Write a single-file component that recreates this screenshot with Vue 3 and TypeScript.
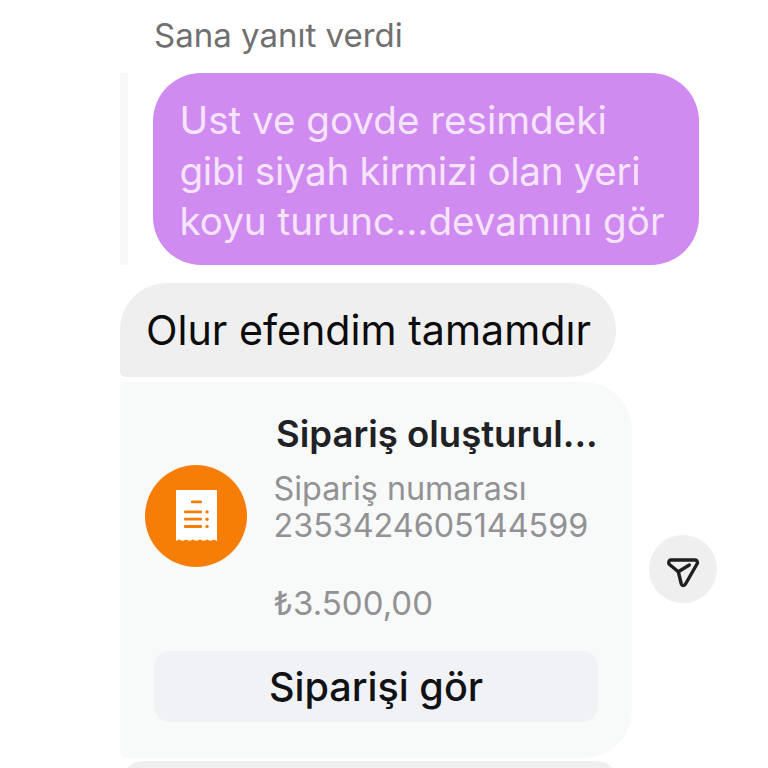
<template>
  <div class="thread">
    <div class="reply-label">Sana yanıt verdi</div>

    <div class="reply-row">
      <div class="reply-bar"></div>
      <div class="reply-bubble">
        Ust ve govde resimdeki<br>
        <span class="tight">gibi siyah kirmizi olan yeri</span><br>
        koyu turunc...devamını gör
      </div>
    </div>

    <div class="message">Olur efendim tamamdır</div>

    <div class="card-row">
      <div class="card">
        <div class="card-body">
          <div class="order-icon">
            <svg width="60" height="60" viewBox="0 0 60 60">
              <path fill="#fff" d="M10 4H51V55L48 53.500L44.500 55L41 53.500L37.500 55L34 53.500L30.500 55L27 53.500L23.500 55L20 53.500L16.500 55L13 53.500L10 55Z" />
              <g fill="#f67d06">
                <rect x="25" y="14.500" width="11" height="2.800" rx="1" />
                <rect x="18" y="24.500" width="18" height="2.800" rx="1" />
                <rect x="18" y="31.800" width="18" height="2.800" rx="1" />
                <rect x="18" y="39.100" width="18" height="2.800" rx="1" />
                <circle cx="41" cy="25.900" r="1.700" />
                <circle cx="41" cy="33.200" r="1.700" />
                <circle cx="41" cy="40.500" r="1.700" />
              </g>
            </svg>
          </div>
          <div class="order-info">
            <div class="order-title">Sipariş oluşturul...</div>
            <div class="order-line">Sipariş numarası</div>
            <div class="order-line">{{ orderNumber }}</div>
            <div class="order-price">{{ price }}</div>
          </div>
        </div>
        <div class="order-button">Siparişi gör</div>
      </div>

      <div class="share">
        <svg class="share-icon" width="36" height="36" viewBox="0 0 36 36" fill="none" stroke="#1f1f1f" stroke-width="3.400" stroke-linejoin="round" stroke-linecap="round">
          <path d="M6 9H30C32 9 33 11 32 13L20.500 33C19.500 35 17 35 16.300 33L13.300 20.700L4.500 13.500C3 12 3.800 9 6 9Z" />
          <path d="M13.300 20.700L24.300 14" />
        </svg>
      </div>
    </div>

    <div class="next-message"></div>
  </div>
</template>

<script setup lang="ts">
const orderNumber = '2353424605144599'
const price = '₺3.500,00'
</script>

<style>
html, body {
  background: #fff;
  overflow: hidden;
}
</style>

<style scoped>
.thread {
  height: 768px;
  overflow: hidden;
  padding-left: 120px;
  box-sizing: border-box;
  font-family: Inter, "Noto Sans", sans-serif;
  background: #fff;
}

.reply-label {
  height: 73px;
  box-sizing: border-box;
  padding: 15px 0 0 34px;
  font-size: 33px;
  line-height: 40px;
  color: #707070;
}

.reply-row {
  display: flex;
  gap: 25px;
}

.reply-bar {
  width: 8px;
  background: #f8f8f8;
}

.reply-bubble {
  width: 546px;
  height: 192px;
  box-sizing: border-box;
  padding: 22px 0 0 26.500px;
  border-radius: 48px;
  background: #cf8bf0;
  color: #f6e4fd;
  font-size: 38.600px;
  line-height: 50.500px;
  white-space: nowrap;
}

.tight {
  letter-spacing: -0.300px;
}

.message {
  width: 496px;
  height: 94px;
  box-sizing: border-box;
  margin-top: 18px;
  padding: 24px 0 0 26px;
  border-radius: 48px 48px 48px 6px;
  background: #efefef;
  color: #0c0c0c;
  font-size: 41.200px;
  line-height: 46px;
  white-space: nowrap;
}

.card-row {
  display: flex;
  align-items: center;
  gap: 17px;
  margin-top: 5px;
}

.card {
  width: 512px;
  height: 376px;
  box-sizing: border-box;
  padding: 30px 34px 0 25px;
  border-radius: 6px 48px 48px 6px;
  background: #f8f9f9;
}

.card-body {
  display: flex;
  align-items: flex-start;
  gap: 26.500px;
}

.order-icon {
  width: 102px;
  height: 102px;
  margin-top: 53px;
  flex-shrink: 0;
  display: flex;
  align-items: center;
  justify-content: center;
  border-radius: 50%;
  background: #f67d06;
}

.order-title {
  margin-bottom: 14px;
  margin-left: 2.500px;
  font-size: 36.500px;
  line-height: 44px;
  font-weight: 600;
  color: #202124;
  white-space: nowrap;
}

.order-line {
  font-size: 32.300px;
  line-height: 37px;
  color: #929294;
  white-space: nowrap;
}

.order-price {
  margin-top: 41px;
  font-size: 33px;
  line-height: 37px;
  color: #929294;
}

.order-button {
  height: 71px;
  margin: 29px 0 0 9px;
  display: flex;
  align-items: center;
  justify-content: center;
  border-radius: 16px;
  background: #f1f2f5;
  color: #111216;
  font-size: 39.600px;
  font-weight: 500;
}

.share {
  width: 68px;
  height: 68px;
  margin-bottom: 2px;
  display: flex;
  align-items: center;
  justify-content: center;
  border-radius: 50%;
  background: #efefef;
}

.share-icon {
  overflow: visible;
}

.next-message {
  width: 500px;
  height: 60px;
  margin-top: 3px;
  border-radius: 24px 24px 0 0;
  background: #efefef;
}
</style>
